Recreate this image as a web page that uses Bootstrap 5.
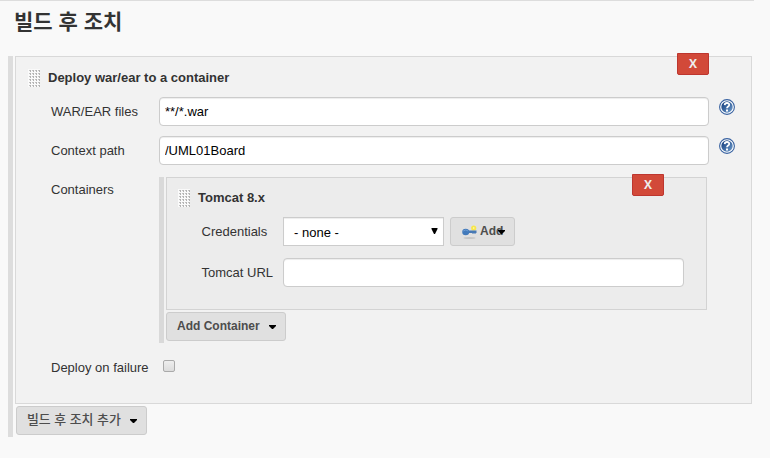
<!DOCTYPE html>
<html lang="ko">
<head>
<meta charset="utf-8">
<meta name="viewport" content="width=device-width, initial-scale=1">
<title>빌드 후 조치</title>
<link href="https://cdn.jsdelivr.net/npm/bootstrap@5.3.0/dist/css/bootstrap.min.css" rel="stylesheet">
<style>
body{background:#f9f9f9;color:#333;font:13px/20px "Liberation Sans","Noto Sans CJK KR",sans-serif;height:458px;overflow:hidden}
.config{width:754px;border-top:1px solid #ddd;padding-left:8px}
.section-title{font-size:21px;font-weight:700;line-height:24px;margin:9px 0 22px 6px}
.chunk-group{border-left:5px solid #ddd;padding-left:2px}
.chunk{border:1px solid #d9d9d9;background:#f2f2f2}
.chunk-outer{width:737px;height:348px;padding:9px 0 0 12px}
.chunk-inner{width:541px;height:133px;background:#ececec;border-color:#d3d3d3;padding:8px 0 0 11px}
.inner-group{height:166px;border-color:#d9d9d9}
.grip{width:13px;height:19px;flex:none}
.chunk-head{height:24px;gap:7px}
.field-row{height:29px;margin:10px 0 0 23px}
.first-row{margin-top:7px}
.field-row .form-label{width:108px;flex:none;margin:0;padding-top:5px}
.chunk-inner .field-row .form-label{width:82px;padding-left:.5px}
.field-row .form-control{height:29px;padding:0 5px;font-size:13px;color:#000;border:1px solid #ccc;border-radius:4px;box-shadow:inset 0 1px 1px #00000013}
.field-row .form-control.w-main{width:550px}
.field-row .form-control.w-sub{width:401px}
.pick{width:161px;height:29px;background:#fff;border:1px solid #ccc;box-shadow:inset 0 1px 1px #00000013;color:#000;padding:0 5px 0 10px}
.pick span{padding-top:2px}
.pick svg{margin-bottom:2px}
.btn-menu{height:29px;background:#e0e0e0;border:1px solid #ccc;border-radius:3px;color:#4d4d4d;font-size:12px;font-weight:700;line-height:26px;padding:0 9px 0 10px}
.btn-menu:not(.btn-key) span{margin-top:-1px}
.btn-menu span.ko{font-size:12.9px;font-weight:500;margin-top:-1px}
.btn-cross{right:42px;top:-4px;width:32px;height:22px;background:#d24939;border:1px solid #bd362f;border-radius:0 0 2px 2px;color:#eee;font:700 12px/20px "Open Sans",sans-serif;padding:0;text-align:center}
.help{margin:2px 0 0 10px}
.field-row .form-check-input{width:12px;height:12px;margin:0 0 4px 4px;border:1px solid #aaa;border-radius:2px;background:linear-gradient(#eee,#dcdcdc)}
.list-row{margin-top:12px}
.check-row{margin-top:10px}
.check-row .form-label{padding-top:0}
</style>
</head>
<body>
<svg width="0" height="0" class="position-absolute">
<defs>
<pattern id="dots" width="3" height="3" patternUnits="userSpaceOnUse"><path d="M1 1h2v1H1z" fill="#c4c4c4"/><path d="M2 1h1v1H2zM2 2h1v1H2z" fill="#b4b4b4"/></pattern>
<linearGradient id="blue" x1="0" y1="0" x2="1" y2="1"><stop offset=".2" stop-color="#204a87"/><stop offset="1" stop-color="#729fcf"/></linearGradient>
<symbol id="helpIcon" viewBox="0 0 16 16"><circle cx="8" cy="8" r="7.4" fill="#fff" stroke="#3761a0" stroke-width="1.1"/><circle cx="8" cy="8" r="5.7" fill="url(#blue)"/><path d="M5.700 6.100C5.800 3.200 10.400 3.400 10.200 6 10.100 7.700 8 7.500 8 9.300" fill="none" stroke="#fff" stroke-width="1.8"/><path d="M7 10.600h2v2H7z" fill="#fff"/></symbol>
<symbol id="gripIcon" viewBox="0 0 13 19"><path d="M0 0h12v18H0z" fill="#fafafa"/><path d="M0 0h12v18H0z" fill="url(#dots)"/></symbol>
<symbol id="caret" viewBox="0 0 7 4"><path d="M0 0h7v1L4 4H3L0 1z"/></symbol>
</defs>
</svg>
<main class="config">
  <h1 class="section-title">빌드 후 조치</h1>
  <div class="chunk-group">
    <section class="chunk chunk-outer position-relative">
      <button class="btn btn-cross position-absolute">X</button>
      <div class="chunk-head d-flex align-items-center"><svg class="grip"><use href="#gripIcon"/></svg><b>Deploy war/ear to a container</b></div>
      <div class="field-row first-row d-flex"><label class="form-label">WAR/EAR files</label><input class="form-control w-main" value="**/*.war"><svg class="help" width="16" height="16"><use href="#helpIcon"/></svg></div>
      <div class="field-row d-flex"><label class="form-label">Context path</label><input class="form-control w-main" value="/UML01Board"><svg class="help" width="16" height="16"><use href="#helpIcon"/></svg></div>
      <div class="field-row list-row d-flex h-auto"><label class="form-label" style="padding-top:3px">Containers</label>
        <div class="chunk-group inner-group">
          <section class="chunk chunk-inner position-relative">
            <button class="btn btn-cross position-absolute">X</button>
            <div class="chunk-head d-flex align-items-center"><svg class="grip"><use href="#gripIcon"/></svg><b>Tomcat 8.x</b></div>
            <div class="field-row first-row d-flex"><label class="form-label">Credentials</label>
              <div class="pick d-flex align-items-center justify-content-between" role="combobox"><span>- none -</span><svg width="7" height="6" viewBox="0 0 7 6"><path d="M.5 0h6v1L4 6H3L.5 1z"/></svg></div>
              <button class="btn btn-menu btn-key position-relative d-flex p-0" style="width:65px;margin-left:6px"><svg width="16" height="16" viewBox="0 0 16 16" style="margin:6px 0 0 11px"><ellipse cx="7.5" cy="14" rx="6" ry="1" fill="#bbb" opacity=".7"/><circle cx="11.7" cy="4" r="2.6" fill="#f7e64a"/><circle cx="11.7" cy="4" r=".8" fill="#fffbc5"/><path d="M6 6.500h8.500v2.500h-1V10h-1V9h-1v1h-1V9H6z" fill="#4779b5"/><ellipse cx="3.700" cy="8" rx="3.500" ry="3.300" fill="#427abb"/><path d="M1.200 7q2.500-2 5 0" fill="none" stroke="#6c9bd2"/></svg><span style="margin-left:2px">Add</span><svg class="position-absolute" width="7" height="4" style="right:9px;top:12px"><use href="#caret"/></svg></button>
            </div>
            <div class="field-row list-row d-flex"><label class="form-label">Tomcat URL</label><input class="form-control w-sub"></div>
          </section>
          <button class="btn btn-menu d-flex align-items-center justify-content-between" style="width:120px;margin-top:2px"><span>Add Container</span><svg width="7" height="4"><use href="#caret"/></svg></button>
        </div>
      </div>
      <div class="field-row check-row d-flex align-items-center"><label class="form-label">Deploy on failure</label><input type="checkbox" class="form-check-input"></div>
    </section>
    <div style="padding:2px 0 2px 1px"><button class="btn btn-menu d-flex align-items-center justify-content-between" style="width:131px"><span class="ko">빌드 후 조치 추가</span><svg width="7" height="4"><use href="#caret"/></svg></button></div>
  </div>
</main>
<script src="https://cdn.jsdelivr.net/npm/bootstrap@5.3.0/dist/js/bootstrap.bundle.min.js"></script>
</body>
</html>
